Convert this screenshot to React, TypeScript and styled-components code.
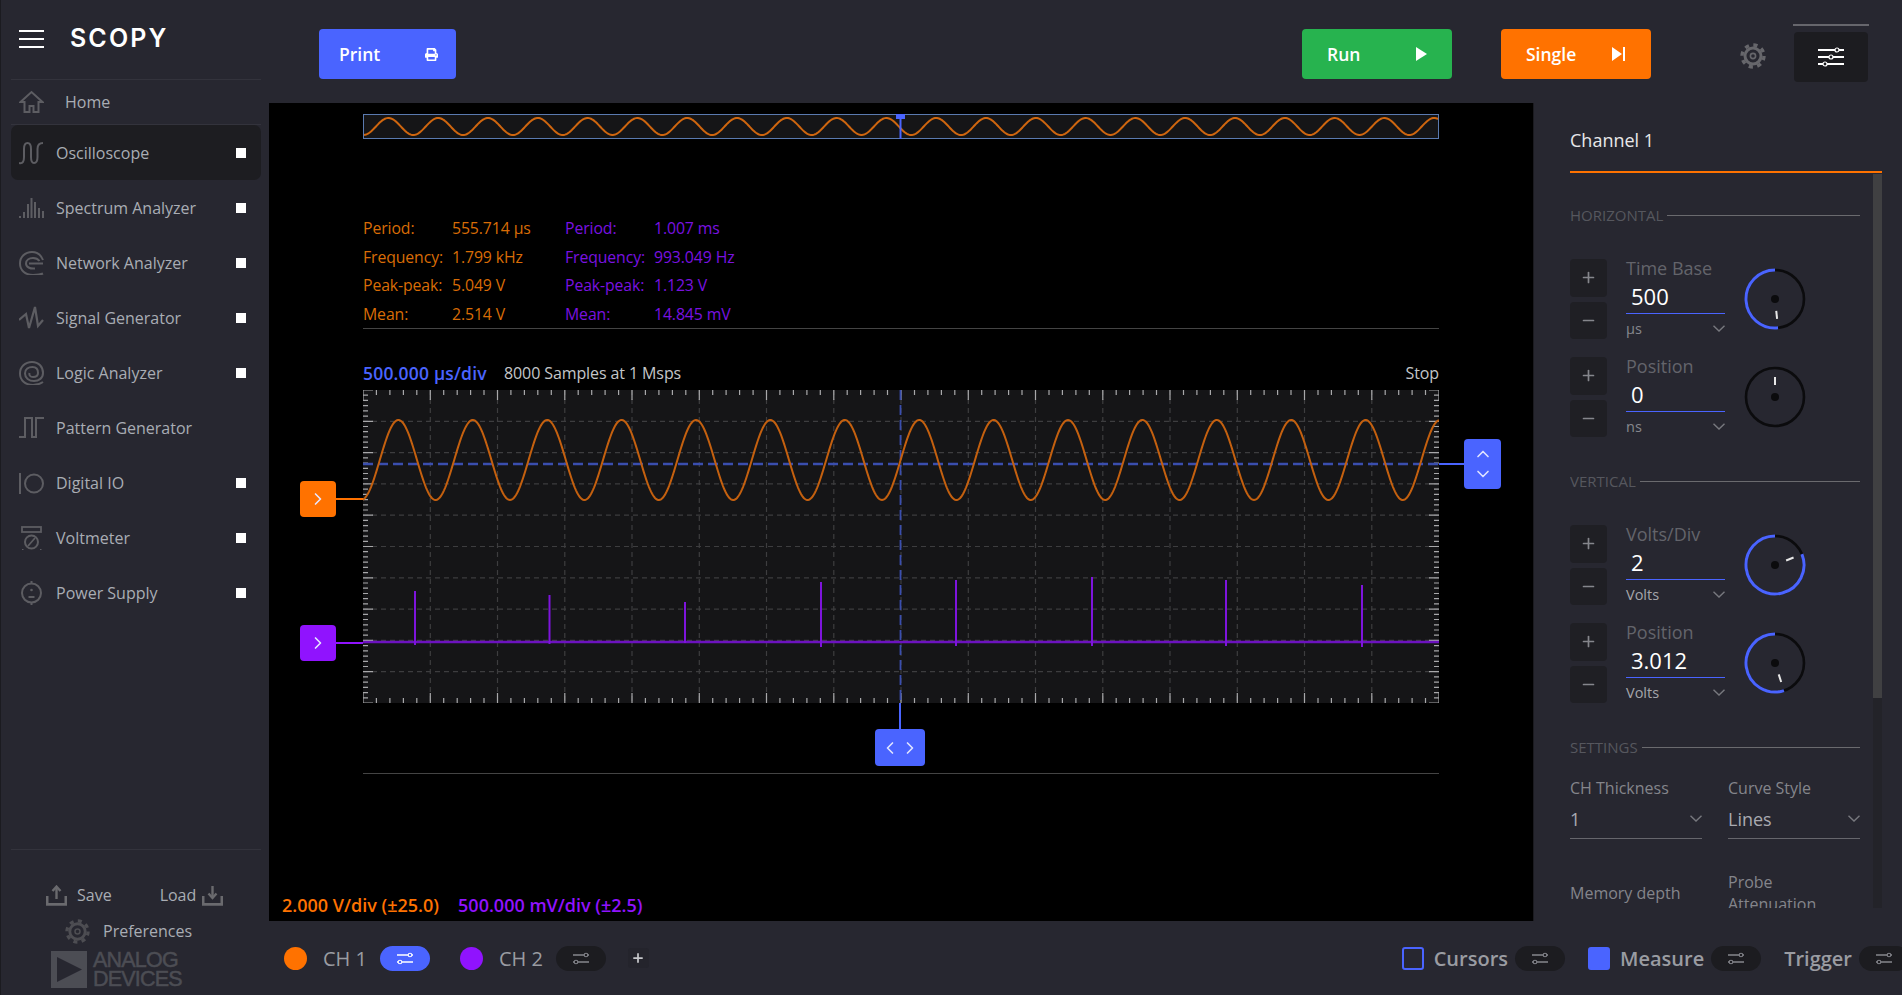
import React from 'react';
import styled, { createGlobalStyle } from 'styled-components';
import { ChevronDown, ChevronLeft, ChevronRight, ChevronUp, Minus, Plus } from 'lucide-react';
import { FaPrint } from 'react-icons/fa';

const BLUE = '#4a64ff';
const ORANGE = '#ff7200';
const PURPLE = '#9013fe';

const GlobalStyle = createGlobalStyle`
  html, body {
    margin: 0;
    padding: 0;
    background: #000;
    overflow: hidden;
  }
  * {
    box-sizing: border-box;
  }
  body {
    font-family: "Open Sans", "Liberation Sans", sans-serif;
  }
`;

const Shell = styled.div`
  display: grid;
  grid-template-columns: 269px 1fr;
  width: 1902px;
  height: 995px;
  overflow: hidden;
`;

/* ---------- sidebar ---------- */

const Sidebar = styled.aside`
  display: flex;
  flex-direction: column;
  height: 995px;
  background: #272730;
  border-left: 1px solid #1b1b20;
  color: #a9adb4;
`;

const Brand = styled.div`
  display: flex;
  align-items: center;
  gap: 26px;
  height: 79px;
  padding: 0 0 2px 18px;
`;

const Logo = styled.span`
  font-family: Inter, "Liberation Sans", sans-serif;
  font-size: 25px;
  font-weight: 600;
  letter-spacing: 2.1px;
  line-height: 1;
  color: #fff;
`;

const Rule = styled.div`
  height: 1px;
  margin: 0 8px 0 10px;
  background: #33333c;
`;

const HomeRow = styled.div`
  display: flex;
  align-items: center;
  gap: 21px;
  height: 44px;
  padding-left: 18px;
  font-size: 16px;
`;

const NavItem = styled.div<{ $active?: boolean }>`
  display: flex;
  align-items: center;
  gap: 12px;
  height: 55px;
  margin: 0 8px 0 10px;
  padding: 0 15px 0 8px;
  border-radius: 7px;
  font-size: 16px;
  background: ${({ $active }) => ($active ? '#1d1d21' : 'transparent')};
`;

const NavLabel = styled.span`
  flex: 1;
`;

const NavIcon = styled.svg`
  flex: none;
  width: 25px;
  height: 24px;
  fill: none;
  stroke: #5d5d62;
  stroke-width: 2;
`;

const RunDot = styled.span`
  width: 10px;
  height: 10px;
  background: #fff;
`;

const Footer = styled.div`
  margin-top: auto;
`;

const SaveRow = styled.div`
  display: flex;
  align-items: center;
  gap: 10px;
  height: 28px;
  margin-top: 31px;
  padding-left: 45px;
  font-size: 16px;
`;

const LoadLabel = styled.span`
  margin-left: 38px;
  margin-right: -4px;
`;

const PrefRow = styled.div`
  display: flex;
  align-items: center;
  gap: 13px;
  height: 30px;
  margin-top: 7px;
  padding-left: 64px;
  font-size: 16px;
`;

const AdiMark = styled.div`
  display: flex;
  align-items: center;
  gap: 6px;
  height: 37px;
  margin: 5px 0 7px 50px;
`;

const AdiText = styled.span`
  font-family: "Liberation Sans", Arial, sans-serif;
  font-size: 21.5px;
  font-weight: 400;
  line-height: 18.5px;
  letter-spacing: -0.8px;
  color: #4c4d54;
  -webkit-text-stroke: 0.5px #4c4d54;
`;

/* ---------- top bar ---------- */

const Content = styled.div`
  display: flex;
  flex-direction: column;
  height: 995px;
`;

const TopBar = styled.header`
  display: flex;
  align-items: center;
  flex: none;
  height: 103px;
  padding: 5px 33px 0 50px;
  background: #272730;
`;

const ActionButton = styled.div<{ $color: string; $wide?: boolean }>`
  display: flex;
  align-items: center;
  justify-content: space-between;
  width: ${({ $wide }) => ($wide ? '150px' : '137px')};
  height: 50px;
  padding: 0 ${({ $wide }) => ($wide ? '25px' : '18px')} 0 ${({ $wide }) => ($wide ? '25px' : '20px')};
  border-radius: 4px;
  background: ${({ $color }) => $color};
  color: #fff;
  font-size: 17.5px;
  font-weight: 600;
`;

const TopRight = styled.div`
  display: flex;
  align-items: center;
  margin-left: auto;
`;

const SingleSlot = styled.div`
  margin-left: 49px;
`;

const GearSlot = styled.div`
  display: flex;
  margin: 3px 27px 0 89px;
`;

const MenuSlot = styled.div`
  display: flex;
  flex-direction: column;
  gap: 6px;
  width: 76px;
  margin-top: -2px;
`;

const MenuBar = styled.div`
  height: 2px;
  background: #66666c;
`;

const MenuButton = styled.div`
  display: flex;
  align-items: center;
  justify-content: center;
  width: 74px;
  height: 50px;
  margin-left: 1px;
  border-radius: 4px;
  background: #1c1c20;
`;

/* ---------- stage ---------- */

const Middle = styled.div`
  display: grid;
  grid-template-columns: 1fr 369px;
  flex: none;
  height: 818px;
`;

const Stage = styled.main`
  display: flex;
  flex-direction: column;
  background: #000;
`;

const Scope = styled.div`
  width: 1076px;
  margin-left: 94px;
`;

const Overview = styled.svg`
  display: block;
  width: 1076px;
  height: 25px;
  margin-top: 11px;
`;

const Measures = styled.div`
  display: flex;
  margin-top: 75px;
  height: 114px;
`;

const MeasureBlock = styled.div<{ $color: string }>`
  display: grid;
  grid-template-columns: 89px 1fr;
  grid-auto-rows: 28.5px;
  align-items: center;
  width: 202px;
  font-size: 15.8px;
  letter-spacing: -0.1px;
  color: ${({ $color }) => $color};
`;

const Divider = styled.div`
  height: 1px;
  background: #444;
`;

const InfoRow = styled.div`
  display: flex;
  align-items: center;
  height: 20px;
  margin-top: 34px;
  font-size: 16px;
  letter-spacing: -0.1px;
  color: #c4c6c9;
`;

const TimeDiv = styled.span`
  width: 141px;
  font-size: 17.5px;
  font-weight: 600;
  letter-spacing: 0.2px;
  color: ${BLUE};
`;

const StopLabel = styled.span`
  margin-left: auto;
`;

const PlotArea = styled.div`
  position: relative;
  height: 313px;
  margin-top: 7px;
`;

const PlotSvg = styled.svg`
  display: block;
  width: 1076px;
  height: 313px;
  background: #151517;
`;

const Handle = styled.div<{ $color: string; $top: number }>`
  position: absolute;
  left: -63px;
  top: ${({ $top }) => $top}px;
  display: flex;
  align-items: center;
  justify-content: center;
  width: 36px;
  height: 36px;
  border-radius: 4px;
  background: ${({ $color }) => $color};
  color: #e6e6ff;
  &::after {
    content: '';
    position: absolute;
    left: 36px;
    top: 17px;
    width: 27px;
    height: 2px;
    background: ${({ $color }) => $color};
  }
`;

const TriggerHandle = styled.div`
  position: absolute;
  left: 1101px;
  top: 49px;
  display: flex;
  flex-direction: column;
  align-items: center;
  justify-content: center;
  width: 37px;
  height: 50px;
  border-radius: 4px;
  background: ${BLUE};
  color: #dfe3ff;
  &::after {
    content: '';
    position: absolute;
    left: -25px;
    top: 24px;
    width: 25px;
    height: 2px;
    background: ${BLUE};
  }
`;

const TimeHandle = styled.div`
  position: absolute;
  left: 512px;
  top: 339px;
  display: flex;
  align-items: center;
  justify-content: center;
  width: 50px;
  height: 37px;
  border-radius: 4px;
  background: ${BLUE};
  color: #dfe3ff;
  &::after {
    content: '';
    position: absolute;
    left: 24px;
    top: -26px;
    width: 2px;
    height: 26px;
    background: ${BLUE};
  }
`;

const LowerDivider = styled(Divider)`
  margin-top: 70px;
`;

const ScaleRow = styled.div`
  display: flex;
  gap: 19px;
  margin-top: auto;
  padding: 0 0 4px 13px;
  height: 28px;
  font-size: 18px;
  font-weight: 600;
`;

const ScaleText = styled.span<{ $color: string }>`
  color: ${({ $color }) => $color};
`;

/* ---------- right panel ---------- */

const Panel = styled.aside`
  display: flex;
  flex-direction: column;
  height: 818px;
  padding: 0 20px 0 36px;
  background: #272730;
  border-left: 1px solid #1b1b20;
`;

const PanelTitle = styled.div`
  flex: none;
  height: 70px;
  padding-top: 24px;
  border-bottom: 2px solid ${ORANGE};
  font-size: 18px;
  line-height: 26px;
  color: #e8e8ea;
`;

const PanelBody = styled.div`
  display: flex;
  justify-content: space-between;
  height: 735px;
  overflow: hidden;
`;

const Controls = styled.div`
  width: 290px;
`;

const Track = styled.div`
  width: 9px;
  height: 735px;
  margin-top: 1px;
  background: #232329;
`;

const Thumb = styled.div`
  height: 524px;
  background: #404042;
`;

const SectionTitle = styled.div`
  display: flex;
  align-items: center;
  gap: 4px;
  height: 20px;
  margin-top: 34px;
  font-size: 15px;
  color: #56575e;
  &::after {
    content: '';
    flex: 1;
    height: 1px;
    background: #6a6a6e;
  }
  &:first-child {
    margin-top: 32px;
  }
`;

const ControlList = styled.div`
  display: flex;
  flex-direction: column;
  gap: 18px;
  margin-top: 34px;
`;

const ControlRow = styled.div`
  display: grid;
  grid-template-columns: 37px 99px 62px;
  column-gap: 19px;
  align-items: center;
  height: 80px;
`;

const StepColumn = styled.div`
  display: flex;
  flex-direction: column;
  gap: 5px;
`;

const StepButton = styled.div`
  display: flex;
  align-items: center;
  justify-content: center;
  width: 37px;
  height: 37.5px;
  border-radius: 4px;
  background: #1f1f24;
  color: #85868c;
`;

const Field = styled.div`
  display: flex;
  flex-direction: column;
  height: 80px;
`;

const FieldLabel = styled.div`
  height: 20px;
  font-size: 18px;
  line-height: 18px;
  color: #63646b;
`;

const FieldValue = styled.div`
  height: 35px;
  padding: 2px 0 0 5px;
  border-bottom: 1px solid ${BLUE};
  font-size: 22px;
  line-height: 30px;
  color: #fff;
`;

const FieldUnit = styled.div<{ $muted?: boolean }>`
  display: flex;
  align-items: center;
  justify-content: space-between;
  height: 17px;
  margin-top: 6px;
  font-size: 14.5px;
  color: ${({ $muted }) => ($muted ? '#86878d' : '#a5a6ab')};
`;

const KnobSvg = styled.svg`
  display: block;
  width: 62px;
  height: 62px;
`;

const SelectGrid = styled.div`
  display: grid;
  grid-template-columns: 132px 132px;
  column-gap: 26px;
  margin-top: 21px;
`;

const SelectLabel = styled.div`
  height: 20px;
  font-size: 16px;
  line-height: 20px;
  color: #84858b;
`;

const SelectBox = styled.div`
  display: flex;
  align-items: center;
  justify-content: space-between;
  height: 37px;
  margin-top: 4px;
  padding-bottom: 3px;
  border-bottom: 1px solid #66666c;
  font-size: 18px;
  color: #a9aab0;
`;

const MoreGrid = styled.div`
  display: grid;
  grid-template-columns: 132px 132px;
  column-gap: 26px;
  align-items: center;
  margin-top: 32px;
  font-size: 16px;
  line-height: 22px;
  color: #84858b;
`;

/* ---------- bottom bar ---------- */

const BottomBar = styled.footer`
  display: flex;
  align-items: center;
  flex: none;
  height: 74px;
  padding-left: 15px;
  background: #272730;
  overflow: hidden;
`;

const ChannelGroup = styled.div`
  display: flex;
  align-items: center;
  margin-right: 30px;
`;

const Dot = styled.span<{ $color: string }>`
  width: 23px;
  height: 23px;
  margin-right: 16px;
  border-radius: 50%;
  background: ${({ $color }) => $color};
`;

const BarLabel = styled.span`
  margin-right: 7px;
  font-size: 20px;
  font-weight: 600;
  color: #9a9ca2;
`;

const ChannelLabel = styled(BarLabel)`
  margin-right: 13px;
  font-weight: 500;
`;

const Pill = styled.div<{ $active?: boolean }>`
  display: flex;
  align-items: center;
  justify-content: center;
  flex: none;
  width: 50px;
  height: 25px;
  border-radius: 13px;
  background: ${({ $active }) => ($active ? BLUE : '#1c1c20')};
`;

const AddButton = styled.div`
  display: flex;
  align-items: center;
  justify-content: center;
  width: 21px;
  height: 20px;
  margin-left: -8px;
  border-radius: 3px;
  background: #24242c;
  color: #c5c6ca;
`;

const RightGroup = styled.div`
  display: flex;
  align-items: center;
  margin-left: auto;
  margin-right: -7px;
`;

const ToggleBox = styled.span<{ $on?: boolean }>`
  width: 22px;
  height: 23px;
  margin-right: 10px;
  border-radius: 3px;
  border: 2px solid ${BLUE};
  background: ${({ $on }) => ($on ? BLUE : 'transparent')};
`;

const ToolGroup = styled.div`
  display: flex;
  align-items: center;
  margin-right: 23px;
  &:last-child {
    margin-right: 0;
  }
`;

/* ---------- drawings ---------- */

const sinePath = (x0: number, x1: number, peakX: number, period: number, mid: number, amp: number) => {
  const pts: string[] = [];
  for (let x = x0; x <= x1; x += 1) {
    const y = mid - amp * Math.cos(((x - peakX) / period) * Math.PI * 2);
    pts.push(`${x},${y.toFixed(2)}`);
  }
  return `M${pts.join(' L')}`;
};

const Slider = ({ color = '#fff', rows = 2 }: { color?: string; rows?: 2 | 3 }) =>
  rows === 3 ? (
    <svg width="26" height="20" viewBox="0 0 26 20">
      <g stroke={color} strokeWidth="2">
        <path d="M0 3h26M0 10h26M0 17h26" />
        <circle cx="19" cy="3" r="2" fill="#1c1c20" strokeWidth="1.2" />
        <circle cx="13" cy="10" r="2" fill="#1c1c20" strokeWidth="1.2" />
        <circle cx="7" cy="17" r="2" fill="#1c1c20" strokeWidth="1.2" />
      </g>
    </svg>
  ) : (
    <svg width="16" height="13" viewBox="0 0 16 13">
      <g stroke={color} strokeWidth="1.6" fill="none">
        <path d="M0 3h11M15 3h1M0 10h1M5 10h11" />
        <circle cx="13" cy="3" r="1.8" strokeWidth="1.1" />
        <circle cx="3" cy="10" r="1.8" strokeWidth="1.1" />
      </g>
    </svg>
  );

const Gear = ({ size = 26, color = '#66666b' }: { size?: number; color?: string }) => (
  <svg width={size} height={size} viewBox="0 0 26 26" fill="none" stroke={color}>
    <circle cx="13" cy="13" r="8" strokeWidth="3" />
    <circle cx="13" cy="13" r="11" strokeWidth="3.4" strokeDasharray="4.2 4.44" />
    <circle cx="13" cy="13" r="2.6" strokeWidth="1.6" />
  </svg>
);

const DownMark = ({ color = '#77787e' }: { color?: string }) => (
  <svg width="12" height="7" viewBox="0 0 12 7" fill="none" stroke={color} strokeWidth="1.4">
    <path d="M.5 .7 6 6 11.5 .7" />
  </svg>
);

const TrayIcon = ({ up }: { up?: boolean }) => (
  <svg width="21" height="21" viewBox="0 0 21 21" fill="none" stroke="#6a6a6e" strokeWidth="2.4">
    <path d="M1.2 11v8.4h18.6V11" strokeWidth="2.6" />
    <path d={up ? 'M10.5 14V3' : 'M10.5 1v11'} />
    <path d={up ? 'M6.5 6 10.5 1.6 14.5 6' : 'M6.5 8.5 10.5 13 14.5 8.5'} />
  </svg>
);

const HomeIcon = () => (
  <NavIcon viewBox="0 0 25 24">
    <path d="M1.5 12 12.5 2 23.5 12H19.5V22H14.5V16H10.5V22H5.5V12Z" />
  </NavIcon>
);

const ScopeIcon = () => (
  <NavIcon viewBox="0 0 25 24">
    <path d="M0 22c4 1 5-2 5-6V8c0-4 1.500-6 3.500-6S12 4 12 8v8c0 4 1 6 3 6s3.500-2 3.500-6V8c0-4 1.500-6 5.500-6" />
  </NavIcon>
);

const SpectrumIcon = () => (
  <NavIcon viewBox="0 0 25 24">
    <path d="M1 20v2M5 16v6M9 8v14M12.500 2v20M16 6v16M20 12v10M24 15v7" strokeWidth="2" />
  </NavIcon>
);

const NetworkIcon = () => (
  <NavIcon viewBox="0 0 25 24">
    <path d="M24 22.500C21 24 18 24 14 24 6 24 1 19 1 12.500S6 1 13 1c5 0 9 3 11 8" strokeWidth="2" />
    <path d="M24 12.500H10M16 17.500c-5 .5-9-1.500-9-5s3-5.500 7-5.500c3 0 5 1 6.500 3" strokeWidth="2" />
  </NavIcon>
);

const SignalIcon = () => (
  <NavIcon viewBox="0 0 25 24">
    <path d="M0 14 7 8l3 14 6-21 3 19 5-6" strokeWidth="2.200" />
  </NavIcon>
);

const LogicIcon = () => (
  <NavIcon viewBox="0 0 25 24">
    <path d="M24 21c-3 2-6 3-10 3C6 24 1 19 1 12.500S6 1 13 1s11 5 11 11c0 5-4 8-9 8s-9-3-9-7.500S9.500 6 13.500 6 19 9 19 12s-2 4-5 4-4-2-3.500-4" strokeWidth="2" />
  </NavIcon>
);

const PatternIcon = () => (
  <NavIcon viewBox="0 0 25 24">
    <path d="M0 21H6V2H13V21H17V2H25" strokeWidth="2" />
  </NavIcon>
);

const DigitalIcon = () => (
  <NavIcon viewBox="0 0 25 24">
    <path d="M1 2V23" strokeWidth="2" />
    <circle cx="15" cy="12.500" r="9" strokeWidth="2" />
  </NavIcon>
);

const VoltIcon = () => (
  <NavIcon viewBox="0 0 25 24">
    <rect x="3" y="1" width="19" height="5" strokeWidth="1.800" />
    <circle cx="12.500" cy="16" r="6.500" strokeWidth="2" />
    <path d="M9 20 16 12M3 24h1.500M21 24h1.500" strokeWidth="1.800" />
  </NavIcon>
);

const PowerIcon = () => (
  <NavIcon viewBox="0 0 25 24">
    <circle cx="12.500" cy="12" r="9.500" strokeWidth="2" />
    <path d="M12.500 0v2.500M12.500 21.500V24M9.500 16h6" strokeWidth="2" />
    <circle cx="12.500" cy="9" r="1.300" fill="#5d5d62" stroke="none" />
  </NavIcon>
);

const PlotDrawing = () => {
  const w = 1076;
  const h = 313;
  const dx = w / 16;
  const dy = h / 10;
  const ticks: string[] = [];
  for (let i = 0; i <= 160; i += 2) {
    const x = (i * dx) / 10;
    const len = i % 10 === 0 ? 10 : i % 5 === 0 ? 7 : 5;
    ticks.push(`M${x.toFixed(1)} 0v${len}M${x.toFixed(1)} ${h}v-${len}`);
  }
  for (let i = 0; i <= 60; i += 1) {
    const y = (i * dy) / 6;
    const len = i % 6 === 0 ? 10 : 5;
    ticks.push(`M0 ${y.toFixed(1)}h${len}M${w} ${y.toFixed(1)}h-${len}`);
  }
  const grid: string[] = [];
  for (let i = 1; i < 16; i += 1) grid.push(`M${(i * dx).toFixed(1)} 0V${h}`);
  for (let i = 1; i < 10; i += 1) grid.push(`M0 ${(i * dy).toFixed(1)}H${w}`);
  const spikes: [number, number, number][] = [
    [52, 591, 645],
    [186.500, 595, 644],
    [322, 602, 643],
    [458, 582, 647],
    [593, 580, 646],
    [729, 577, 646],
    [863, 580, 646],
    [999, 585, 647],
  ];
  return (
    <PlotSvg viewBox={`0 0 ${w} ${h}`}>
      <path d={grid.join('')} stroke="#3d3d3f" strokeWidth="1.200" strokeDasharray="5 4" fill="none" />
      <path d={ticks.join('')} stroke="#a8a8aa" strokeWidth="1.200" fill="none" />
      <path d={`M0 74H${w}`} stroke="#3a4eae" strokeWidth="2.500" strokeDasharray="10 5" />
      <path d={`M537.500 0V${h}`} stroke="#3a4eae" strokeWidth="1.800" strokeDasharray="10 5" />
      <path d={sinePath(0, w, 35.400, 74.400, 70, 40)} stroke="#c4600f" strokeWidth="2" fill="none" />
      <path d="M0 252H1076" stroke="#6c12bf" strokeWidth="2.500" />
      {spikes.map(([x, top, bottom]) => (
        <path key={x} d={`M${x} ${top - 390}V${bottom - 390}`} stroke="#7e14dc" strokeWidth="2" />
      ))}
    </PlotSvg>
  );
};

const OverviewDrawing = () => (
  <Overview viewBox="0 0 1076 25">
    <rect x=".5" y=".5" width="1075" height="24" fill="#151517" stroke="#5a7ab0" />
    <path d={sinePath(1, 1075, 25.400, 49.800, 12.500, 8.500)} stroke="#cf660f" strokeWidth="2" fill="none" />
    <path d="M537.500 0V25" stroke={BLUE} strokeWidth="2" />
    <rect x="533" y="0" width="9" height="5" fill={BLUE} />
  </Overview>
);

const Knob = ({ sweep }: { sweep: number }) => {
  const c = 31;
  const r = 29;
  const a = (sweep * Math.PI) / 180;
  const ex = c - r * Math.sin(a);
  const ey = c - r * Math.cos(a);
  const large = sweep > 180 ? 1 : 0;
  const tick = (d: number) => `${c - d * Math.sin(a)} ${c - d * Math.cos(a)}`;
  return (
    <KnobSvg viewBox="0 0 62 62">
      <circle cx={c} cy={c} r={r} fill="none" stroke="#0b0b0d" strokeWidth="2.600" />
      {sweep > 0 && (
        <path d={`M${c} ${c - r}A${r} ${r} 0 ${large} 0 ${ex} ${ey}`} fill="none" stroke={BLUE} strokeWidth="3" />
      )}
      <circle cx={c} cy={c} r="4" fill="#0b0b0d" />
      <path d={`M${tick(12)}L${tick(20)}`} stroke="#e8e8e8" strokeWidth="2" />
    </KnobSvg>
  );
};

/* ---------- data ---------- */

const tools = [
  { name: 'Oscilloscope', Icon: ScopeIcon, active: true, dot: true },
  { name: 'Spectrum Analyzer', Icon: SpectrumIcon, dot: true },
  { name: 'Network Analyzer', Icon: NetworkIcon, dot: true },
  { name: 'Signal Generator', Icon: SignalIcon, dot: true },
  { name: 'Logic Analyzer', Icon: LogicIcon, dot: true },
  { name: 'Pattern Generator', Icon: PatternIcon },
  { name: 'Digital IO', Icon: DigitalIcon, dot: true },
  { name: 'Voltmeter', Icon: VoltIcon, dot: true },
  { name: 'Power Supply', Icon: PowerIcon, dot: true },
];

const measureRows = (values: string[]) =>
  ['Period:', 'Frequency:', 'Peak-peak:', 'Mean:'].map((label, i) => [label, values[i]]);

const Control = ({
  label,
  value,
  unit,
  sweep,
  muted,
}: {
  label: string;
  value: string;
  unit: string;
  sweep: number;
  muted?: boolean;
}) => (
  <ControlRow>
    <StepColumn>
      <StepButton>
        <Plus size={17} strokeWidth={2.4} />
      </StepButton>
      <StepButton>
        <Minus size={17} strokeWidth={2.4} />
      </StepButton>
    </StepColumn>
    <Field>
      <FieldLabel>{label}</FieldLabel>
      <FieldValue>{value}</FieldValue>
      <FieldUnit $muted={muted}>
        {unit}
        <DownMark />
      </FieldUnit>
    </Field>
    <Knob sweep={sweep} />
  </ControlRow>
);

export default function App() {
  return (
    <Shell>
      <GlobalStyle />
      <Sidebar>
        <Brand>
          <svg width="25" height="20" viewBox="0 0 25 20" stroke="#fff" strokeWidth="2">
            <path d="M0 2h25M0 10h25M0 18h25" />
          </svg>
          <Logo>SCOPY</Logo>
        </Brand>
        <Rule />
        <HomeRow>
          <HomeIcon />
          Home
        </HomeRow>
        <Rule />
        {tools.map(({ name, Icon, active, dot }) => (
          <NavItem key={name} $active={active}>
            <Icon />
            <NavLabel>{name}</NavLabel>
            {dot && <RunDot />}
          </NavItem>
        ))}
        <Footer>
          <Rule />
          <SaveRow>
            <TrayIcon up />
            Save
            <LoadLabel>Load</LoadLabel>
            <TrayIcon />
          </SaveRow>
          <PrefRow>
            <Gear size={25} color="#4d4d52" />
            Preferences
          </PrefRow>
          <AdiMark>
            <svg width="36" height="37" viewBox="0 0 36 37">
              <rect width="36" height="37" fill="#4c4d54" />
              <path d="M6 6 31 18.500 6 31Z" fill="#272730" />
            </svg>
            <AdiText>
              ANALOG
              <br />
              DEVICES
            </AdiText>
          </AdiMark>
        </Footer>
      </Sidebar>

      <Content>
        <TopBar>
          <ActionButton $color={BLUE}>
            Print
            <FaPrint size={13} />
          </ActionButton>
          <TopRight>
            <ActionButton $color="#27b34f" $wide>
              Run
              <svg width="11" height="14" viewBox="0 0 11 14" fill="#fff">
                <path d="M0 0 11 7 0 14Z" />
              </svg>
            </ActionButton>
            <SingleSlot>
              <ActionButton $color={ORANGE} $wide>
                Single
                <svg width="14" height="14" viewBox="0 0 14 14" fill="#fff">
                  <path d="M0 0 10 7 0 14ZM11 0h2v14h-2Z" />
                </svg>
              </ActionButton>
            </SingleSlot>
            <GearSlot>
              <Gear />
            </GearSlot>
            <MenuSlot>
              <MenuBar />
              <MenuButton>
                <Slider rows={3} />
              </MenuButton>
            </MenuSlot>
          </TopRight>
        </TopBar>

        <Middle>
          <Stage>
            <Scope>
              <OverviewDrawing />
              <Measures>
                <MeasureBlock $color="#d96c06">
                  {measureRows(['555.714 µs', '1.799 kHz', '5.049 V', '2.514 V']).map(([k, v]) => (
                    <React.Fragment key={k}>
                      <span>{k}</span>
                      <span>{v}</span>
                    </React.Fragment>
                  ))}
                </MeasureBlock>
                <MeasureBlock $color="#7a12e0">
                  {measureRows(['1.007 ms', '993.049 Hz', '1.123 V', '14.845 mV']).map(([k, v]) => (
                    <React.Fragment key={k}>
                      <span>{k}</span>
                      <span>{v}</span>
                    </React.Fragment>
                  ))}
                </MeasureBlock>
              </Measures>
              <Divider />
              <InfoRow>
                <TimeDiv>500.000 µs/div</TimeDiv>
                8000 Samples at 1 Msps
                <StopLabel>Stop</StopLabel>
              </InfoRow>
              <PlotArea>
                <PlotDrawing />
                <Handle $color={ORANGE} $top={91}>
                  <ChevronRight size={20} />
                </Handle>
                <Handle $color={PURPLE} $top={235}>
                  <ChevronRight size={20} />
                </Handle>
                <TriggerHandle>
                  <ChevronUp size={20} />
                  <ChevronDown size={20} />
                </TriggerHandle>
                <TimeHandle>
                  <ChevronLeft size={20} />
                  <ChevronRight size={20} />
                </TimeHandle>
              </PlotArea>
              <LowerDivider />
            </Scope>
            <ScaleRow>
              <ScaleText $color={ORANGE}>2.000 V/div (±25.0)</ScaleText>
              <ScaleText $color={PURPLE}>500.000 mV/div (±2.5)</ScaleText>
            </ScaleRow>
          </Stage>

          <Panel>
            <PanelTitle>Channel 1</PanelTitle>
            <PanelBody>
              <Controls>
                <SectionTitle>HORIZONTAL</SectionTitle>
                <ControlList>
                  <Control label="Time Base" value="500" unit="µs" sweep={186} muted />
                  <Control label="Position" value="0" unit="ns" sweep={0} muted />
                </ControlList>
                <SectionTitle>VERTICAL</SectionTitle>
                <ControlList>
                  <Control label="Volts/Div" value="2" unit="Volts" sweep={292} />
                  <Control label="Position" value="3.012" unit="Volts" sweep={198} />
                </ControlList>
                <SectionTitle>SETTINGS</SectionTitle>
                <SelectGrid>
                  <div>
                    <SelectLabel>CH Thickness</SelectLabel>
                    <SelectBox>
                      1
                      <DownMark />
                    </SelectBox>
                  </div>
                  <div>
                    <SelectLabel>Curve Style</SelectLabel>
                    <SelectBox>
                      Lines
                      <DownMark />
                    </SelectBox>
                  </div>
                </SelectGrid>
                <MoreGrid>
                  <span>Memory depth</span>
                  <span>Probe Attenuation</span>
                </MoreGrid>
              </Controls>
              <Track>
                <Thumb />
              </Track>
            </PanelBody>
          </Panel>
        </Middle>

        <BottomBar>
          <ChannelGroup>
            <Dot $color={ORANGE} />
            <ChannelLabel>CH 1</ChannelLabel>
            <Pill $active>
              <Slider />
            </Pill>
          </ChannelGroup>
          <ChannelGroup>
            <Dot $color={PURPLE} />
            <ChannelLabel>CH 2</ChannelLabel>
            <Pill>
              <Slider color="#85868c" />
            </Pill>
          </ChannelGroup>
          <AddButton>
            <Plus size={14} strokeWidth={3} />
          </AddButton>
          <RightGroup>
            <ToolGroup>
              <ToggleBox />
              <BarLabel>Cursors</BarLabel>
              <Pill>
                <Slider color="#85868c" />
              </Pill>
            </ToolGroup>
            <ToolGroup>
              <ToggleBox $on />
              <BarLabel>Measure</BarLabel>
              <Pill>
                <Slider color="#85868c" />
              </Pill>
            </ToolGroup>
            <ToolGroup>
              <BarLabel>Trigger</BarLabel>
              <Pill>
                <Slider color="#85868c" />
              </Pill>
            </ToolGroup>
          </RightGroup>
        </BottomBar>
      </Content>
    </Shell>
  );
}
